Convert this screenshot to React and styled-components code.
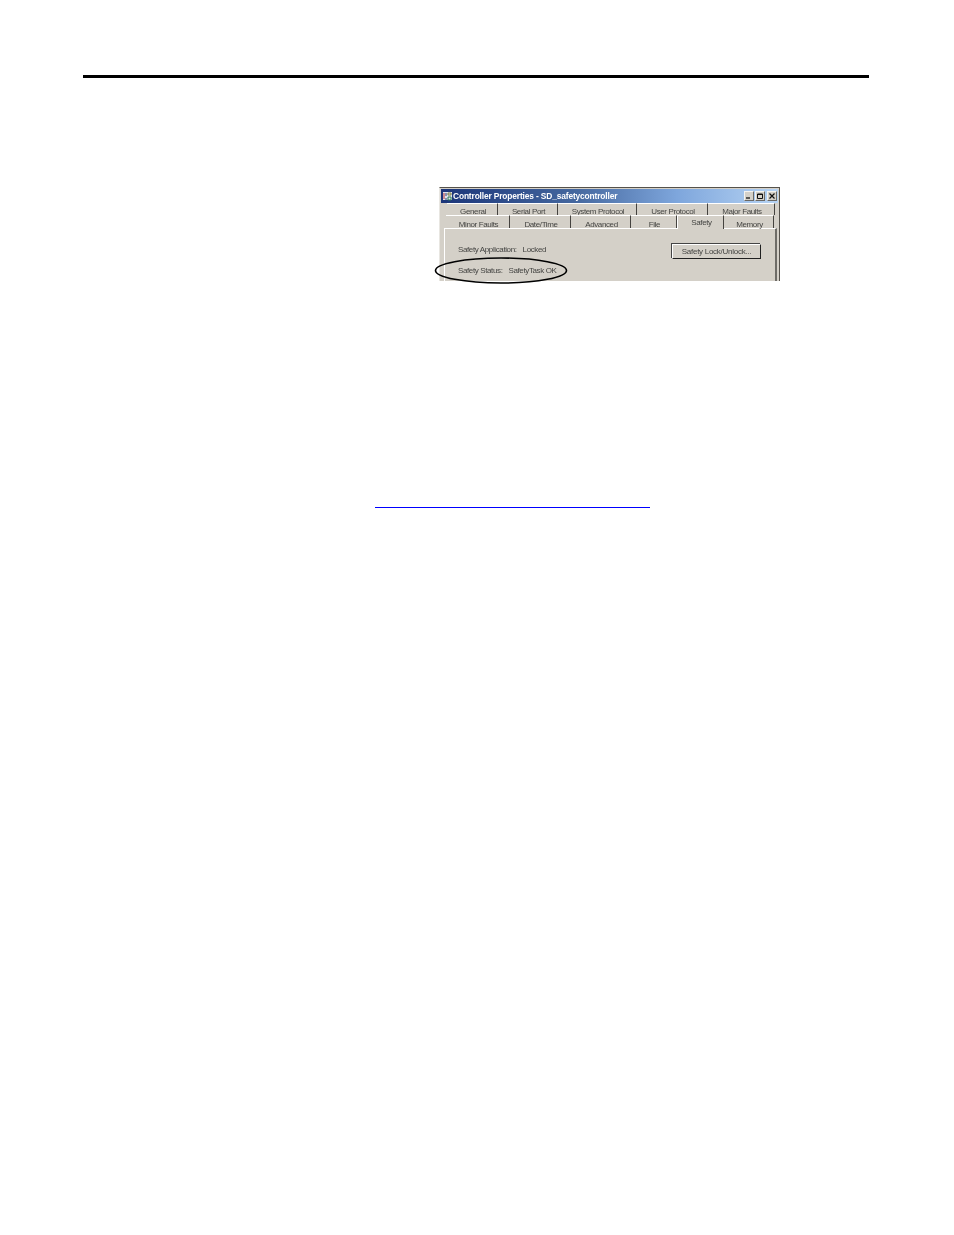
import React from 'react';
import styled, { createGlobalStyle } from 'styled-components';

const GlobalStyle = createGlobalStyle`
	html,
	body {
		margin: 0;
		background: #fff;
	}
`;

const Page = styled.div`
	width: 954px;
	height: 1235px;
	padding-top: 75px;
	box-sizing: border-box;
	font-family: 'Liberation Sans', Arial, sans-serif;
	overflow: hidden;
`;

const HeaderRule = styled.div`
	margin: 0 85px 0 83px;
	height: 3px;
	background: #000;
`;

const Figure = styled.div`
	position: relative;
	width: 341px;
	margin: 109px 0 0 439px;
`;

const Window = styled.div`
	height: 94px;
	box-sizing: border-box;
	background: #d4d0c8;
	border-top: 1px solid #55524c;
	border-left: 1px solid #e8e6e1;
	border-right: 1px solid #55524c;
	overflow: hidden;
	color: #454543;
	font-size: 8px;
	letter-spacing: -0.38px;
	filter: blur(0.35px);
`;

const TitleBar = styled.div`
	height: 14px;
	margin: 1px 1px 0 1px;
	padding: 0 1px 0 2px;
	display: flex;
	align-items: center;
	gap: 1px;
	background: linear-gradient(90deg, #1b3579 0%, #45689f 40%, #7ea6dc 70%, #b6d3f3 100%);
`;

const TitleText = styled.span`
	flex: 1;
	color: #fff;
	font-size: 8.4px;
	font-weight: bold;
	letter-spacing: -0.14px;
	white-space: nowrap;
`;

const WindowButton = styled.button`
	width: 10px;
	height: 10px;
	margin: 0 0 0 ${({ $gap }) => $gap || 0}px;
	padding: 0;
	display: flex;
	align-items: center;
	justify-content: center;
	background: #d4d0c8;
	border: 1px solid;
	border-color: #f4f3f0 #6a6864 #6a6864 #f4f3f0;
`;

const TabRow = styled.div`
	display: flex;
	height: ${({ $height }) => $height}px;
	padding-left: ${({ $inset }) => $inset}px;
`;

const Tab = styled.div`
	width: ${({ $width }) => $width}px;
	box-sizing: border-box;
	display: flex;
	align-items: center;
	justify-content: center;
	white-space: nowrap;
	background: #d4d0c8;
	border-top: 1px solid #fff;
	border-right: 1px solid #45433f;
	padding: ${({ $top }) => $top}px 0 0 2px;
	padding-bottom: ${({ $active }) => ($active ? 3 : 0)}px;
	border-left: ${({ $active }) => ($active ? '1px solid #fff' : 'none')};
	margin-bottom: ${({ $active }) => ($active ? -1 : 0)}px;
	position: ${({ $active }) => ($active ? 'relative' : 'static')};
	z-index: ${({ $active }) => ($active ? 1 : 0)};
`;

const TabPanel = styled.div`
	height: 60px;
	margin: 0 2px 0 4px;
	padding: 14px 14px 0 13px;
	box-sizing: border-box;
	border-top: 1px solid #fff;
	border-left: 1px solid #fff;
	border-right: 2px solid #6e6c67;
	display: flex;
	justify-content: space-between;
	align-items: flex-start;
`;

const StatusColumn = styled.div`
	display: flex;
	flex-direction: column;
	gap: 12px;
	padding-top: 2px;
`;

const StatusRow = styled.div`
	display: flex;
	gap: 6px;
	line-height: 9px;
	white-space: nowrap;
`;

const LockButton = styled.button`
	width: 89px;
	height: 15px;
	margin: 1px 0 0 0;
	padding: 0;
	background: #d4d0c8;
	font: inherit;
	letter-spacing: -0.27px;
	color: inherit;
	border: 1px solid;
	border-color: #fff #202020 #202020 #fff;
	box-shadow: -1px -1px 0 #444;
`;

const Ellipse = styled.svg`
	position: absolute;
	left: -5px;
	top: 69px;
	width: 134px;
	height: 29px;
`;

const Link = styled.div`
	width: 275px;
	height: 1px;
	margin: 226px 0 0 375px;
	background: #0000ff;
`;

const rowOne = [
	['General', 51],
	['Serial Port', 60],
	['System Protocol', 79],
	['User Protocol', 71],
	['Major Faults', 67],
];

const rowTwo = [
	['Minor Faults', 64],
	['Date/Time', 61],
	['Advanced', 60],
	['File', 46],
	['Safety', 47, true],
	['Memory', 50],
];

const App = () => {
	return (
		<Page>
			<GlobalStyle />
			<HeaderRule />
			<Figure>
				<Window>
					<TitleBar>
						<svg width="9" height="10" viewBox="0 0 9 10">
							<rect x="0" y="1" width="9" height="8" fill="#dfe4ec" />
							<path d="M1 2v6" stroke="#b33" />
							<path d="M3 2v3M3 7v2" stroke="#2a3f7a" />
							<path d="M5 2h3v2H5z" stroke="#7a7a40" fill="none" />
							<path d="M5 6h3v3H5z" stroke="#2a7a50" fill="none" />
						</svg>
						<TitleText>Controller Properties - SD_safetycontroller</TitleText>
						<WindowButton>
							<svg width="6" height="6" viewBox="0 0 6 6">
								<path d="M0 5h4" stroke="#222" strokeWidth="1.4" />
							</svg>
						</WindowButton>
						<WindowButton>
							<svg width="6" height="6" viewBox="0 0 6 6">
								<path d="M.5 1h5v4.5h-5z M.5 1.5h5" stroke="#111" fill="none" />
							</svg>
						</WindowButton>
						<WindowButton $gap={1}>
							<svg width="6" height="6" viewBox="0 0 6 6">
								<path d="M.5 .5l5 5M5.5 .5l-5 5" stroke="#111" strokeWidth="1.2" />
							</svg>
						</WindowButton>
					</TitleBar>
					<TabRow $height={12} $inset={7}>
						{rowOne.map(([label, width]) => (
							<Tab key={label} $width={width} $top={3}>{label}</Tab>
						))}
					</TabRow>
					<TabRow $height={13} $inset={6}>
						{rowTwo.map(([label, width, active]) => (
							<Tab key={label} $width={width} $active={active} $top={active ? 2 : 5}>{label}</Tab>
						))}
					</TabRow>
					<TabPanel>
						<StatusColumn>
							<StatusRow>
								<span>Safety Application:</span>
								<span>Locked</span>
							</StatusRow>
							<StatusRow>
								<span>Safety Status:</span>
								<span>SafetyTask OK</span>
							</StatusRow>
						</StatusColumn>
						<LockButton>Safety Lock/Unlock...</LockButton>
					</TabPanel>
				</Window>
				<Ellipse viewBox="0 0 134 29">
					<ellipse cx="67" cy="14.5" rx="65.5" ry="12.5" fill="none" stroke="#000" strokeWidth="1.6" />
				</Ellipse>
			</Figure>
			<Link />
		</Page>
	);
};

export default App;
